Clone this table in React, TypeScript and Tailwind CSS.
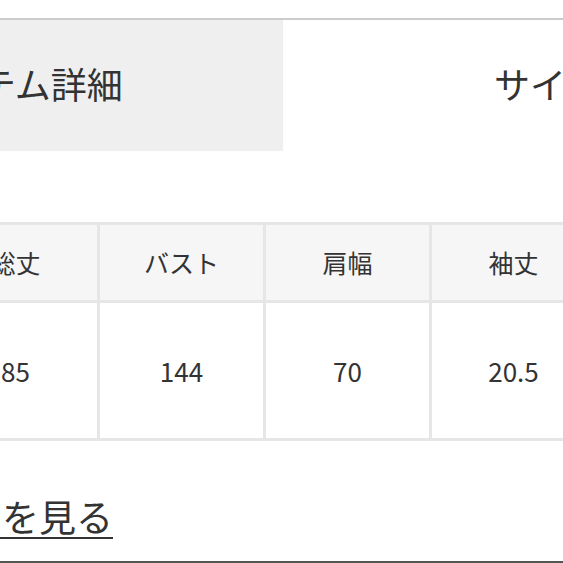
const font = "font-['Noto_Sans_CJK_JP','Noto_Sans',sans-serif]";

const headers = ["総丈", "バスト", "肩幅", "袖丈", "着丈"];
const values = ["85", "144", "70", "20.5", "—"];

const App = () => {
  return (
    <main className={`relative h-[563px] w-[563px] overflow-hidden bg-white text-[#333] ${font}`}>
      <div className="h-[18px]" />

      {/* タブ */}
      <div className="flex w-[1040px] -ml-[227px] border-t-2 border-[#cccccc]">
        <div className="flex h-[131px] w-[509px] items-center justify-center bg-[#efefef] pr-[22px] pb-[6px] text-[36px] leading-none">
          アイテム詳細
        </div>
        <div className="flex h-[131px] w-[526px] items-center justify-center border-l border-[#eeeeee] pl-[4px] pb-[6px] text-[36px] leading-none">
          サイズ
        </div>
      </div>

      {/* サイズ表 */}
      <div className="mt-[71px] -ml-[69px] grid w-[833px] grid-cols-[repeat(5,163px)] gap-[3px] bg-[#e6e6e6] p-[3px]">
        {headers.map((h) => (
          <div key={h} className="flex h-[75px] items-center justify-center bg-[#f6f6f6] text-[25px]">
            {h}
          </div>
        ))}
        {values.map((v, i) => (
          <div key={i} className="flex h-[135px] items-center justify-center bg-white text-[26px]">
            {v}
          </div>
        ))}
      </div>

      <div className="mt-[54px] -ml-[72px]">
        <a href="#" className="text-[37px] leading-[42px] underline decoration-2 underline-offset-[5px]">
          詳細を見る
        </a>
      </div>

      <div className="absolute bottom-0 left-0 h-[2px] w-full bg-[#555555]" />
    </main>
  );
};

export default App;
